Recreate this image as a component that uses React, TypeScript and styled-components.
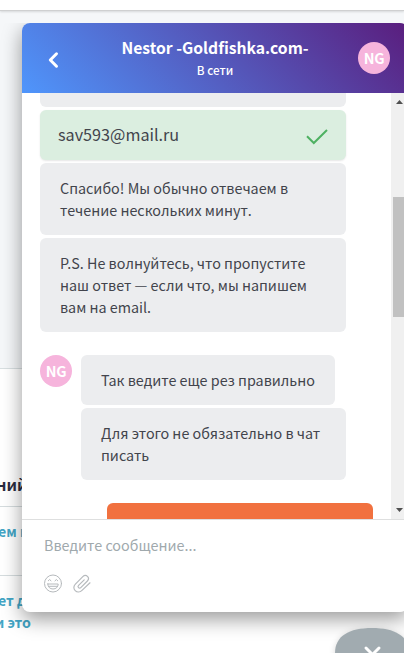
import React from 'react';
import styled, { createGlobalStyle } from 'styled-components';

const GlobalStyle = createGlobalStyle`
  * { box-sizing: border-box; }
  html, body { margin: 0; height: 100%; overflow: hidden; background: #fff; }
  body { font-family: "Noto Sans CJK SC", "Open Sans", sans-serif; }
`;

const Page = styled.div`
  position: relative;
  width: 404px;
  height: 653px;
  overflow: hidden;
  background: #fff;
`;

const TopBar = styled.header`
  height: 11px;
  background: #fff;
  border-bottom: 1px solid #cfd0d1;
  box-shadow: 0 1px 2px rgba(0, 0, 0, 0.12);
  position: relative;
`;

const Banner = styled.div`
  height: 358px;
  background: #f5f7f9;
  border-bottom: 1px solid #d8dfe1;
`;

const Heading = styled.h3`
  margin: 0;
  height: 138px;
  padding-top: 102px;
  font-size: 16px;
  line-height: 26px;
  font-weight: 700;
  color: #2a2c40;
  white-space: nowrap;
  border-bottom: 1px solid #d5dcde;
`;

const Topic = styled.div<{ $height: number; $pad: number }>`
  height: ${p => p.$height}px;
  padding-top: ${p => p.$pad}px;
  border-bottom: 1px solid #d5dcde;
  font-size: 14.2px;
  line-height: 22px;
  font-weight: 700;
  color: #43a5c5;
  white-space: nowrap;
`;

const Shift = styled.span<{ $x: number }>`
  display: block;
  margin-left: ${p => p.$x}px;
`;

const Overlay = styled.div`
  position: absolute;
  inset: 23px 0 0 0;
  overflow: hidden;
`;

const ChatWindow = styled.section`
  position: absolute;
  left: 22px;
  top: 0;
  width: 386px;
  height: 589px;
  display: flex;
  flex-direction: column;
  border-radius: 8px;
  background: #fff;
  box-shadow: 0 7px 20px rgba(0, 0, 0, 0.4);
`;

const ChatHeader = styled.div`
  height: 70px;
  flex: none;
  padding: 0 18px 0 22px;
  display: grid;
  grid-template-columns: 32px 1fr 32px;
  align-items: center;
  border-radius: 8px 8px 0 0;
  color: #fff;
  background: linear-gradient(45deg, #4f96fc 0%, #5a1d7d 100%);
`;

const Back = styled.svg`
  display: block;
  width: 18px;
  height: 20px;
  margin-top: 3px;
`;

const Titles = styled.div`
  text-align: center;
  white-space: nowrap;
  margin: -1px 0 0 -4px;
`;

const Name = styled.div`
  font-size: 15.7px;
  line-height: 24px;
  font-weight: 700;
`;

const Status = styled.div`
  font-size: 11.7px;
  line-height: 20px;
  font-weight: 500;
`;

const Avatar = styled.div`
  flex: none;
  width: 32px;
  height: 32px;
  border-radius: 50%;
  background: #f6b4dc;
  color: #fff;
  font-size: 14.4px;
  line-height: 32px;
  font-weight: 700;
  letter-spacing: -0.3px;
  text-align: center;
`;

const Scroller = styled.div`
  height: 426px;
  flex: none;
  display: flex;
  overflow: hidden;
`;

const Messages = styled.div`
  width: 369px;
  padding: 0 18px;
  display: flex;
  flex-direction: column;
  align-items: flex-start;
  gap: 3px;
  & > * { flex: none; }
`;

const Bubble = styled.div<{ $w?: number; $h: number }>`
  width: ${p => p.$w ?? 306}px;
  height: ${p => p.$h}px;
  padding: 14px 20px;
  border-radius: 6px;
  background: #ecedef;
  color: #42444c;
  font-size: 14.33px;
  line-height: 22px;
  white-space: nowrap;
`;

const CutBubble = styled(Bubble)`
  padding: 0;
  border-radius: 0 0 6px 6px;
`;

const EmailBubble = styled(Bubble)`
  padding: 0 18px;
  display: flex;
  align-items: center;
  justify-content: space-between;
  background: #dbeee0;
  box-shadow: 0 1px 2px rgba(0, 0, 0, 0.1);
  font-size: 16.2px;
`;

const Email = styled.div`
  margin-top: -2px;
`;

const Check = styled.svg`
  display: block;
  width: 22px;
  height: 16px;
  margin-top: 3px;
`;

const Group = styled.div`
  display: flex;
  gap: 9px;
  margin-top: 20px;
`;

const Stack = styled.div`
  display: flex;
  flex-direction: column;
  gap: 3px;
`;

const Outgoing = styled.div`
  align-self: flex-end;
  width: 266px;
  height: 60px;
  margin-top: 20px;
  border-radius: 6px;
  background: #f1713f;
`;

const Scrollbar = styled.div`
  width: 17px;
  display: flex;
  flex-direction: column;
  background: #f0f0f0;
`;

const ArrowBox = styled.svg`
  display: block;
  width: 17px;
  height: 17px;
`;

const Thumb = styled.div`
  width: 15px;
  height: 120px;
  margin: 87px 0 185px 2px;
  background: #c1c1c1;
`;

const Composer = styled.div`
  flex: 1;
  padding: 14px 22px 0;
  border-top: 1px solid #dedfdf;
`;

const Placeholder = styled.div`
  font-size: 14.35px;
  line-height: 22px;
  color: #a0a9ad;
`;

const Tools = styled.div`
  display: flex;
  gap: 11px;
  margin-top: 18px;
`;

const ToolIcon = styled.svg`
  display: block;
  width: 18px;
  height: 19px;
  overflow: visible;
`;

const Launcher = styled.svg`
  position: absolute;
  left: 335px;
  top: 605px;
  width: 74px;
  height: 70px;
  filter: drop-shadow(0 1px 3px rgba(0, 0, 0, 0.15));
`;

export default function App() {
  return (
    <Page>
      <GlobalStyle />
      <TopBar />
      <Banner />
      <Heading><Shift $x={-4}>ний</Shift></Heading>
      <Topic $height={69} $pad={13}><Shift $x={-2}>ем н</Shift></Topic>
      <Topic $height={90} $pad={13}>
        <Shift $x={-2}>ет д</Shift>
        <Shift $x={-5}>и это</Shift>
      </Topic>
      <Overlay>
        <ChatWindow>
          <ChatHeader>
            <Back viewBox="0 0 18 20" fill="none" stroke="#fff" strokeWidth="3" strokeLinecap="round" strokeLinejoin="round">
              <path d="M12.500 3.800 6.300 10l6.200 6.200" />
            </Back>
            <Titles>
              <Name>Nestor -Goldfishka.com-</Name>
              <Status>В сети</Status>
            </Titles>
            <Avatar>NG</Avatar>
          </ChatHeader>
          <Scroller>
            <Messages>
              <CutBubble $h={14} />
              <EmailBubble $h={50}>
                <Email>sav593@mail.ru</Email>
                <Check viewBox="0 0 22 16" fill="none" stroke="#4eb162" strokeWidth="2">
                  <path d="M1 7.200 7.800 14 21 1" />
                </Check>
              </EmailBubble>
              <Bubble $h={72}>
                <div>Спасибо! Мы обычно отвечаем в</div>
                <div>течение нескольких минут.</div>
              </Bubble>
              <Bubble $h={94}>
                <div>P.S. Не волнуйтесь, что пропустите</div>
                <div>наш ответ — если что, мы напишем</div>
                <div>вам на email.</div>
              </Bubble>
              <Group>
                <Avatar>NG</Avatar>
                <Stack>
                  <Bubble $h={50} $w={254}>Так ведите еще рез правильно</Bubble>
                  <Bubble $h={72} $w={265}>
                    <div>Для этого не обязательно в чат</div>
                    <div>писать</div>
                  </Bubble>
                </Stack>
              </Group>
              <Outgoing />
            </Messages>
            <Scrollbar>
              <ArrowBox viewBox="0 0 17 17"><path d="M5 11h7L8.500 7z" fill="#505050" /></ArrowBox>
              <Thumb />
              <ArrowBox viewBox="0 0 17 17"><path d="M5 6h7L8.500 10z" fill="#505050" /></ArrowBox>
            </Scrollbar>
          </Scroller>
          <Composer>
            <Placeholder>Введите сообщение...</Placeholder>
            <Tools>
              <ToolIcon viewBox="0 0 18 19" fill="none" stroke="#b6babd" strokeWidth="1" strokeLinecap="round" strokeLinejoin="round">
                <circle cx="9" cy="9.500" r="8.500" />
                <path d="M4.300 6.800 5.600 5.500 7 6.800M11 6.800l1.400-1.300 1.300 1.300M3.800 10h10.400c0 3-2.200 5-5.200 5s-5.200-2-5.200-5zM5 12.300h8" />
              </ToolIcon>
              <ToolIcon viewBox="0 0 18 19" fill="none" stroke="#b6babd" strokeWidth="1.200" strokeLinecap="round" strokeLinejoin="round">
                <path d="M17 8.800 9 16.400c-2 2-5 2-6.800.2-1.900-1.900-1.700-4.600.2-6.500l7.400-7.400c1.400-1.400 3.400-1.500 4.700-.3 1.300 1.300 1.200 3.200-.1 4.600l-6.600 6.600c-.7.7-1.700.7-2.300.1-.7-.7-.6-1.600.1-2.300l5.600-5.600" />
              </ToolIcon>
            </Tools>
          </Composer>
        </ChatWindow>
        <Launcher viewBox="0 0 74 70">
          <path d="M0 25C0 8 14 0 37 0s37 8 37 25v20c0 17-14 25-37 25S0 62 0 45z" fill="#a1abb0" />
          <path d="m31 20 6.500 6.500L44 20" fill="none" stroke="#fff" strokeWidth="3" strokeLinecap="round" />
        </Launcher>
      </Overlay>
    </Page>
  );
}
